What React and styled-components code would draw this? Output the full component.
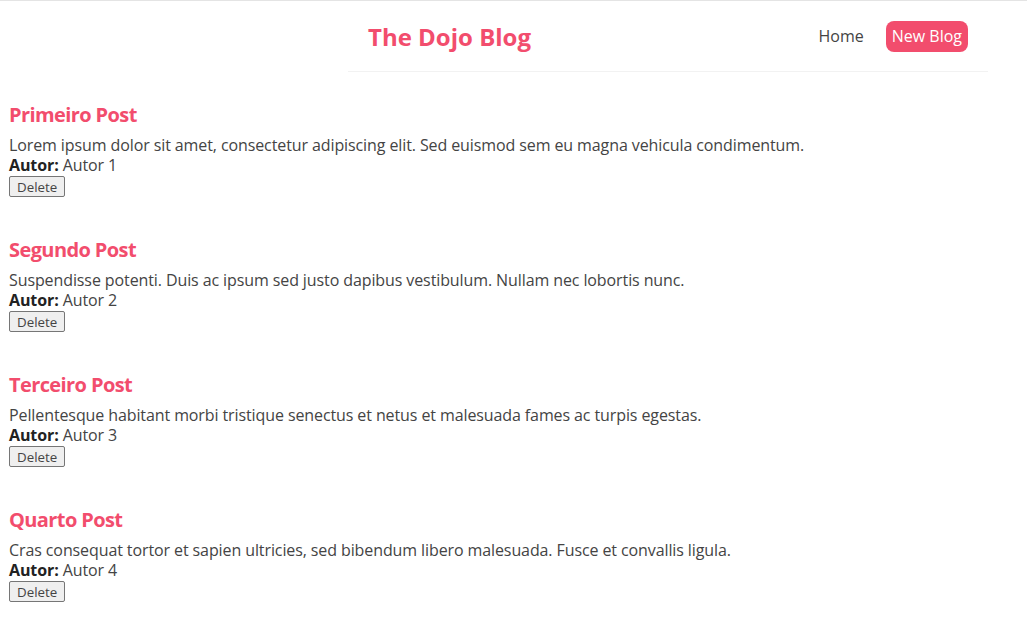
import React, {useState} from 'react';
import styled, {createGlobalStyle} from "styled-components";

const GlobalStyle = createGlobalStyle`
  html, body{
    margin: 0;
    padding: 0;
    background: #fff;
  }
  body{
    font-family: "Open Sans", "Noto Sans", sans-serif;
    color: #444;
  }
`;

const initialPosts = [
  {id: 1, title: 'Primeiro Post', body: 'Lorem ipsum dolor sit amet, consectetur adipiscing elit. Sed euismod sem eu magna vehicula condimentum.', author: 'Autor 1'},
  {id: 2, title: 'Segundo Post', body: 'Suspendisse potenti. Duis ac ipsum sed justo dapibus vestibulum. Nullam nec lobortis nunc.', author: 'Autor 2'},
  {id: 3, title: 'Terceiro Post', body: 'Pellentesque habitant morbi tristique senectus et netus et malesuada fames ac turpis egestas.', author: 'Autor 3'},
  {id: 4, title: 'Quarto Post', body: 'Cras consequat tortor et sapien ultricies, sed bibendum libero malesuada. Fusce et convallis ligula.', author: 'Autor 4'},
];

const App = () => {
  const [posts, setPosts] = useState(initialPosts);
  const deleteHandler = (id) => {
    setPosts(posts.filter(post => post.id !== id));
  }

  return (
    <Page>
      <GlobalStyle />
      <Navbar>
        <h1>The Dojo Blog</h1>
        <Links>
          <NavLink href="#">Home</NavLink>
          <NavLink href="#" $primary>New Blog</NavLink>
        </Links>
      </Navbar>
      <Content>
        {
          posts.map((post) => (
            <Preview key={post.id}>
              <h2>{post.title}</h2>
              <p>{post.body}</p>
              <p><strong>Autor:</strong> {post.author}</p>
              <DeleteButton type="button" onClick={() => deleteHandler(post.id)}>Delete</DeleteButton>
            </Preview>
          ))
        }
      </Content>
    </Page>
  )
}

const Page = styled.div`
  border-top: 1px solid #e4e4e4;
  min-height: 635px;
`;

const Navbar = styled.nav`
  display: flex;
  align-items: center;
  box-sizing: border-box;
  width: 640px;
  height: 71px;
  margin-left: 348px;
  padding: 0 20px;
  border-bottom: 1px solid #f2f2f2;

  h1{
    margin: 0;
    font-size: 24px;
    font-weight: 700;
    color: #f24d6d;
  }
`;

const Links = styled.div`
  margin-left: auto;
  display: flex;
  align-items: center;
`;

const NavLink = styled.a`
  margin-left: 16px;
  padding: 6px;
  border-radius: 8px;
  text-decoration: none;
  font-size: 16px;
  line-height: 19px;
  color: ${props => props.$primary ? '#fff' : '#444'};
  background: ${props => props.$primary ? '#f24d6d' : 'transparent'};
`;

const Content = styled.main`
  padding: 31px 8px 0 9px;
`;

const Preview = styled.div`
  margin-bottom: 41px;

  h2{
    margin: 0 0 8px;
    font-size: 20px;
    line-height: 24px;
    font-weight: 700;
    letter-spacing: -0.6px;
    color: #f24d6d;
  }

  p{
    margin: 0;
    font-size: 16px;
    line-height: 20px;
    letter-spacing: -0.1px;
  }

  strong{
    font-weight: 700;
    color: #222;
  }
`;

const DeleteButton = styled.button`
  display: block;
  margin-top: 1px;
  height: 21px;
  padding: 0 7px;
  font-family: inherit;
  font-size: 13.33px;
  color: #444;
  background: #efefef;
  border: 1px solid #767676;
  border-radius: 2px;
`;

export default App
